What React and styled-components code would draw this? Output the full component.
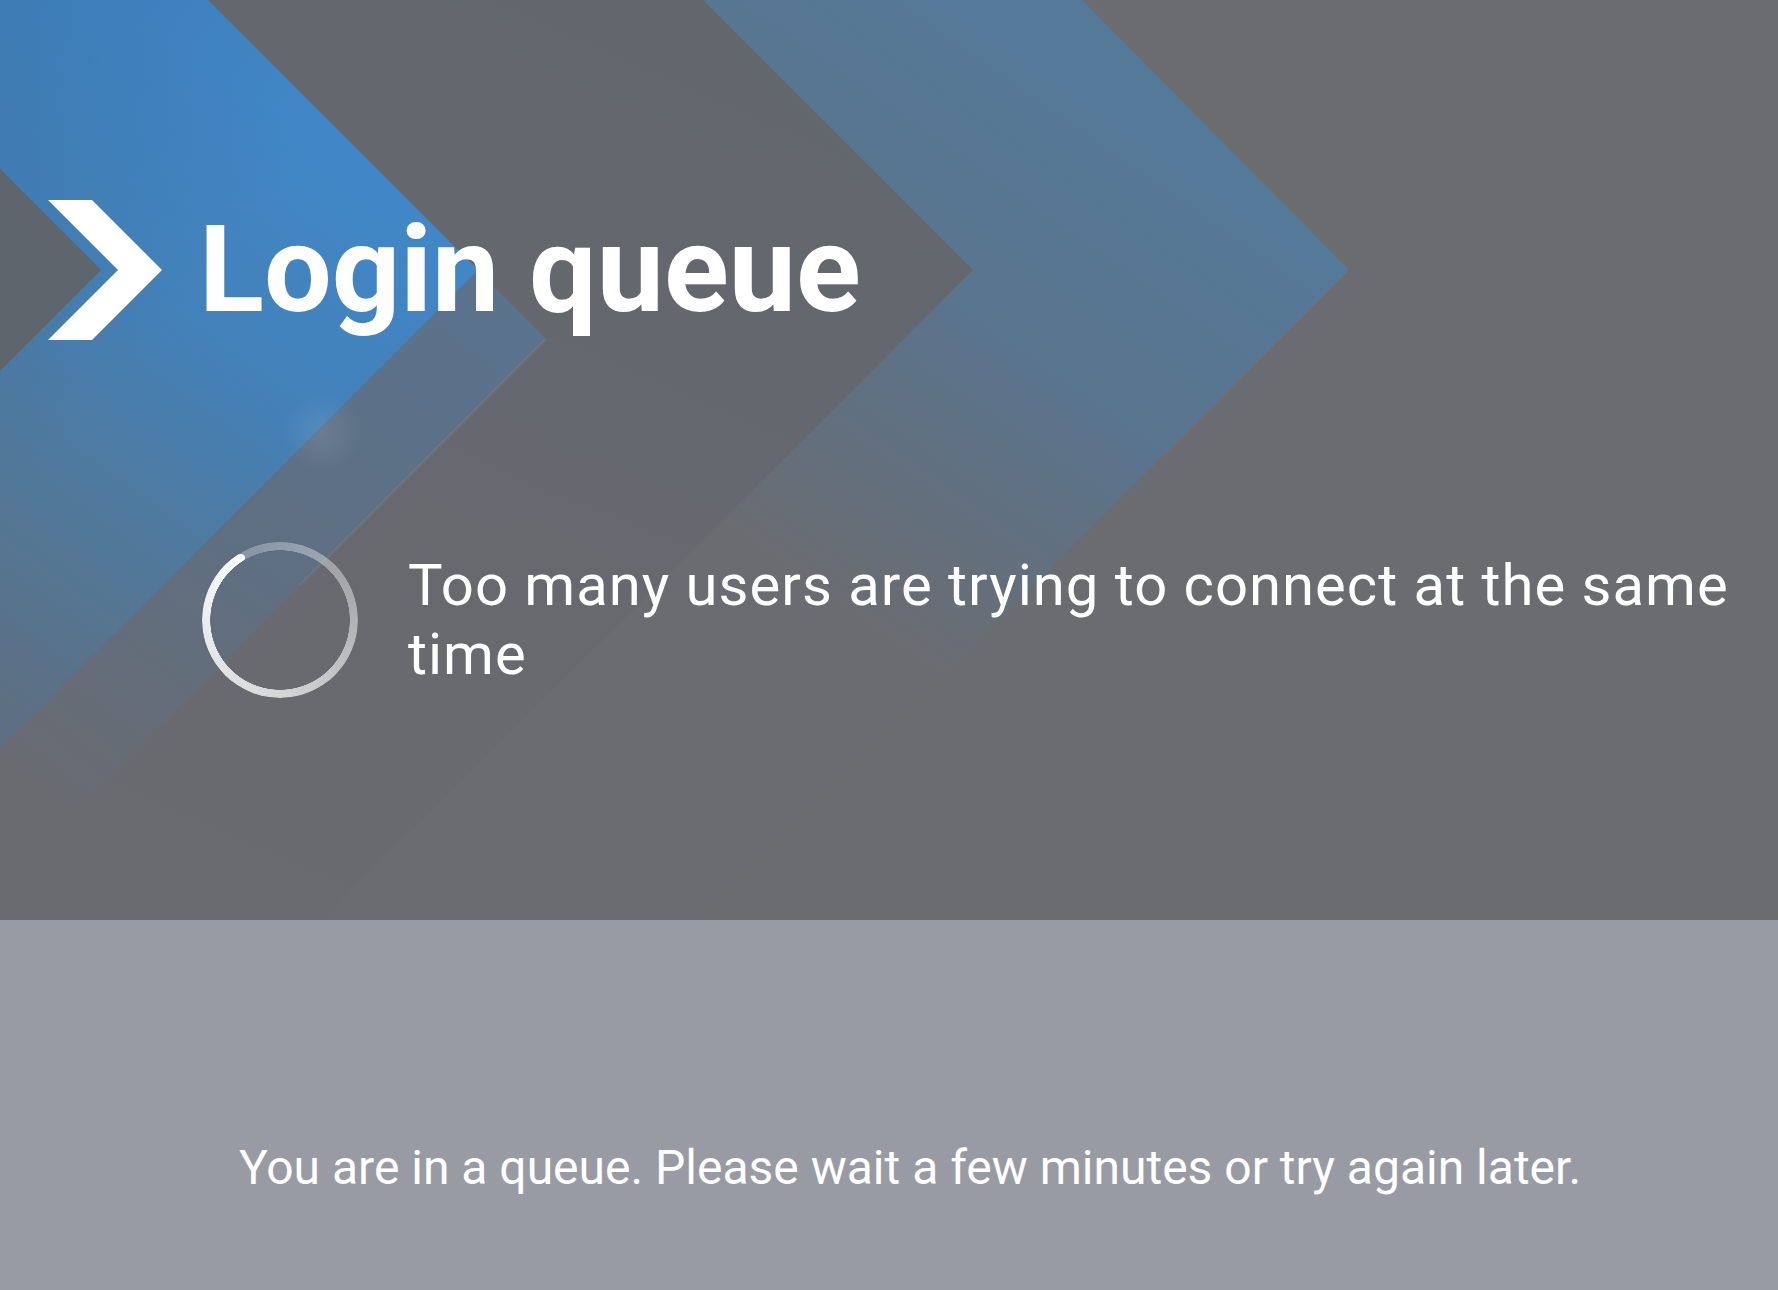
import React from 'react';
import styled, { createGlobalStyle } from 'styled-components';

const GlobalStyle = createGlobalStyle`
	html, body {
		margin: 0;
		padding: 0;
	}
	body {
		font-family: Roboto, "Liberation Sans", sans-serif;
		background: #989ba3;
	}
`;

const Page = styled.div`
	width: 100%;
	min-height: 1290px;
	display: flex;
	flex-direction: column;
`;

const Hero = styled.section`
	position: relative;
	height: 920px;
	overflow: hidden;
	box-sizing: border-box;
	padding-top: 200px;
	background: #6b6c70;
`;

const Backdrop = styled.svg`
	position: absolute;
	top: 0;
	left: 0;
	width: 100%;
	height: 100%;
	z-index: 0;
`;

const Header = styled.header`
	position: relative;
	z-index: 1;
	display: flex;
	align-items: center;
	gap: 37px;
	padding-left: 48px;
`;

const Title = styled.h1`
	margin: 0;
	color: #fff;
	font-size: 120px;
	font-weight: 700;
	line-height: 1;
`;

const Status = styled.div`
	position: relative;
	z-index: 1;
	display: flex;
	align-items: center;
	gap: 50px;
	margin-top: 202px;
	padding: 0 20px 0 202px;
`;

const Spinner = styled.div`
	position: relative;
	flex: none;
	width: 156px;
	height: 156px;
	border-radius: 50%;
	background: conic-gradient(
		from 328deg,
		rgba(255, 255, 255, 0.26),
		rgba(255, 255, 255, 0.45) 30%,
		rgba(255, 255, 255, 0.74) 60%,
		rgba(255, 255, 255, 0.97)
	);
	-webkit-mask: radial-gradient(circle, transparent 69.5px, #000 70px);
	mask: radial-gradient(circle, transparent 69.5px, #000 70px);

	&::after {
		content: '';
		position: absolute;
		left: 34.5px;
		top: 11.5px;
		width: 8px;
		height: 8px;
		border-radius: 50%;
		background: #fafafa;
	}
`;

const Message = styled.p`
	margin: 0;
	color: #fff;
	font-size: 58px;
	font-weight: 400;
	line-height: 69px;
	letter-spacing: 1px;
`;

const Footer = styled.footer`
	height: 370px;
	box-sizing: border-box;
	padding: 219px 0 0 42px;
	background: #989ba3;
	text-align: center;
`;

const Note = styled.p`
	margin: 0;
	color: #fff;
	font-size: 48px;
	line-height: 1.2;
`;

const Chevron = () => (
	<svg width="114" height="140" viewBox="0 0 114 140">
		<polygon points="0,0 44,0 114,70 44,140 0,140 70,70" fill="#fff" />
	</svg>
);

const Background = () => (
	<Backdrop viewBox="0 0 1778 920" preserveAspectRatio="none">
		<defs>
			<linearGradient id="bright" gradientUnits="userSpaceOnUse" x1="400" y1="200" x2="20" y2="720">
				<stop offset="0" stopColor="#4187c7" />
				<stop offset="0.35" stopColor="#4381b9" />
				<stop offset="0.7" stopColor="#527898" />
				<stop offset="1" stopColor="#5d6f82" />
			</linearGradient>
			<linearGradient id="corner" gradientUnits="userSpaceOnUse" x1="0" y1="0" x2="260" y2="220">
				<stop offset="0" stopColor="#2a4f73" stopOpacity="0.18" />
				<stop offset="1" stopColor="#2a4f73" stopOpacity="0" />
			</linearGradient>
			<linearGradient id="haze" gradientUnits="userSpaceOnUse" x1="480" y1="300" x2="80" y2="820">
				<stop offset="0" stopColor="#5a728c" />
				<stop offset="0.55" stopColor="#5f6f81" />
				<stop offset="1" stopColor="#696b71" />
			</linearGradient>
			<linearGradient id="band" gradientUnits="userSpaceOnUse" x1="600" y1="0" x2="200" y2="900">
				<stop offset="0" stopColor="#62666d" />
				<stop offset="1" stopColor="#6a6b70" />
			</linearGradient>
			<linearGradient id="muted" gradientUnits="userSpaceOnUse" x1="1120" y1="120" x2="800" y2="580">
				<stop offset="0" stopColor="#557998" />
				<stop offset="0.45" stopColor="#5a748d" />
				<stop offset="1" stopColor="#6a6c71" />
			</linearGradient>
			<radialGradient id="glow" cx="322" cy="432" r="40" gradientUnits="userSpaceOnUse">
				<stop offset="0" stopColor="#fff" stopOpacity="0.09" />
				<stop offset="1" stopColor="#fff" stopOpacity="0" />
			</radialGradient>
		</defs>
		<polygon points="208,0 703,0 973,270 323,920 0,920 0,885 546,339" fill="url(#band)" />
		<polygon points="703,0 1082,0 1349,270 699,920 323,920 973,270" fill="url(#muted)" />
		<polygon points="0,0 208,0 546,339 0,885" fill="url(#haze)" />
		<polygon points="0,0 208,0 478,270 0,748 0,371 101,270 0,169" fill="url(#bright)" />
		<polygon points="0,0 208,0 478,270 0,748 0,371 101,270 0,169" fill="url(#corner)" />
		<polygon points="0,169 101,270 0,371" fill="#5f656c" />
		<line x1="546" y1="339" x2="300" y2="585" stroke="#fff" strokeOpacity="0.05" strokeWidth="3" />
		<circle cx="322" cy="432" r="40" fill="url(#glow)" />
	</Backdrop>
);

const App = () => (
	<Page>
		<GlobalStyle />
		<Hero>
			<Background />
			<Header>
				<Chevron />
				<Title>Login queue</Title>
			</Header>
			<Status>
				<Spinner />
				<Message>Too many users are trying to connect at the same time</Message>
			</Status>
		</Hero>
		<Footer>
			<Note>You are in a queue. Please wait a few minutes or try again later.</Note>
		</Footer>
	</Page>
);

export default App;
